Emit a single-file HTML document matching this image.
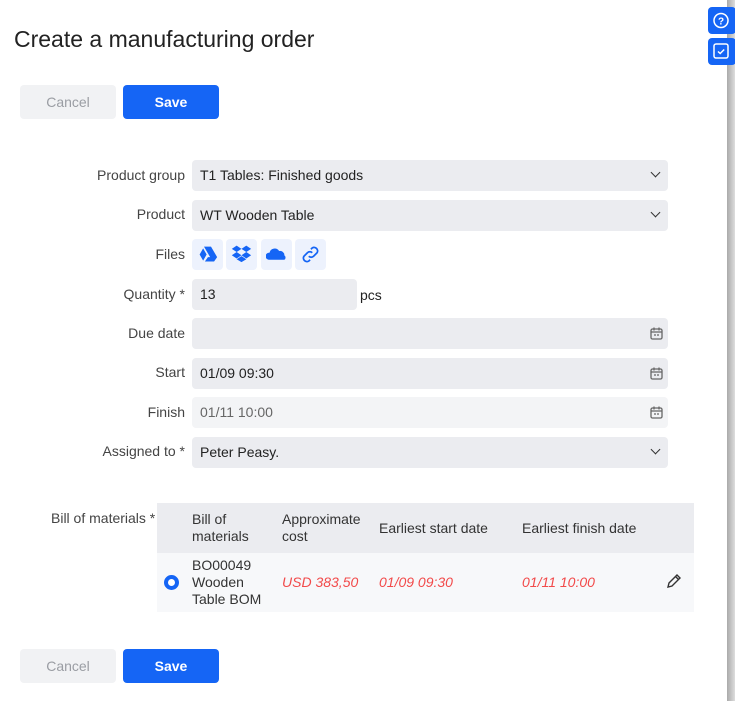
<!DOCTYPE html>
<html><head><style>
*{box-sizing:border-box;margin:0;padding:0}
body{width:735px;height:701px;background:#fff;font-family:"Liberation Sans",sans-serif;color:#222;position:relative;overflow:hidden}
.abs{position:absolute}
h1{position:absolute;left:14px;top:26px;font-size:23px;font-weight:normal;color:#222}
.btn{position:absolute;height:34px;width:96px;border-radius:4px;font-size:14px;text-align:center;line-height:34px}
.cancel{background:#f1f2f4;color:#9a9da3}
.save{background:#1565f5;color:#fff;font-weight:bold}
.lbl{position:absolute;right:550px;font-size:14px;color:#444;text-align:right;white-space:nowrap}
.inp{position:absolute;left:192px;width:476px;height:31px;background:#ebecf0;border-radius:4px;font-size:14px;line-height:31px;padding-left:8px;color:#222}
.chev{position:absolute;right:9px;top:12px;width:7px;height:7px;border-right:1.5px solid #333;border-bottom:1.5px solid #333;transform:rotate(45deg);margin-top:-3px}
.cal{position:absolute;right:5px;top:9px}
.fi{position:absolute;top:239px;width:31px;height:31px;background:#edf2fd;border-radius:4px}
.fi svg{position:absolute;left:5px;top:5px}
table{position:absolute;left:157px;top:503px;width:537px;border-collapse:collapse;font-size:14px}
th{background:#ebecf0;font-weight:normal;text-align:left;color:#333;height:50px;line-height:17px;padding:0}
td{background:#f7f8fa;height:59px;line-height:17px;padding:0;color:#333}
.red{color:#f24a4a;font-style:italic}
</style></head><body>
<h1>Create a manufacturing order</h1>
<div class="btn cancel" style="left:20px;top:85px">Cancel</div>
<div class="btn save" style="left:123px;top:85px">Save</div>

<div class="lbl" style="top:167px">Product group</div>
<div class="inp" style="top:160px">T1 Tables: Finished goods<div class="chev"></div></div>
<div class="lbl" style="top:206px">Product</div>
<div class="inp" style="top:200px">WT Wooden Table<div class="chev"></div></div>
<div class="lbl" style="top:246px">Files</div>
<div class="fi" style="left:192px"><svg width="21" height="21" viewBox="0 0 24 24"><path d="M8 3h8l7 12h-8z M7 5l4 7-4 7-4-7z M9 20l3.5-5H23l-3.5 5z" fill="#1565f5"/></svg></div>
<div class="fi" style="left:226px"><svg width="21" height="21" viewBox="0 0 24 24"><path d="M6 2l6 4-6 4-6-4z M18 2l6 4-6 4-6-4z M6 10l6 4-6 4-6-4z M18 10l6 4-6 4-6-4z M12 15l6 4-6 3.5-6-3.5z" fill="#1565f5" transform="scale(.92) translate(1,0)"/></svg></div>
<div class="fi" style="left:261px"><svg width="21" height="21" viewBox="0 0 24 24"><path d="M3 18a4 4 0 0 1 1-8 6 6 0 0 1 11-2 5 5 0 0 1 6 5 3 3 0 0 1 0 5z" fill="#1565f5"/></svg></div>
<div class="fi" style="left:295px"><svg width="21" height="21" viewBox="0 0 24 24" fill="none" stroke="#1565f5" stroke-width="2"><path d="M10 14a4 4 0 0 0 5.5 0l4-4a4 4 0 0 0-5.5-5.5l-1.5 1.5"/><path d="M14 10a4 4 0 0 0-5.5 0l-4 4a4 4 0 0 0 5.5 5.5l1.5-1.5"/></svg></div>

<div class="lbl" style="top:286px">Quantity *</div>
<div class="inp" style="top:279px;width:165px">13</div>
<div class="abs" style="left:360px;top:287px;font-size:14px">pcs</div>

<div class="lbl" style="top:325px">Due date</div>
<div class="inp" style="top:318px"><svg class="cal" width="13" height="13" viewBox="0 0 13 13" fill="none" stroke="#666" stroke-width="1.3"><rect x="1" y="2" width="11" height="10" rx="1.5"/><path d="M1 5h11M4 0.5v3M9 0.5v3M4 8h2M7 8h2"/></svg></div>
<div class="lbl" style="top:364px">Start</div>
<div class="inp" style="top:358px">01/09 09:30<svg class="cal" width="13" height="13" viewBox="0 0 13 13" fill="none" stroke="#666" stroke-width="1.3"><rect x="1" y="2" width="11" height="10" rx="1.5"/><path d="M1 5h11M4 0.5v3M9 0.5v3M4 8h2M7 8h2"/></svg></div>
<div class="lbl" style="top:404px">Finish</div>
<div class="inp" style="top:397px;background:#f3f4f6;color:#666">01/11 10:00<svg class="cal" width="13" height="13" viewBox="0 0 13 13" fill="none" stroke="#666" stroke-width="1.3"><rect x="1" y="2" width="11" height="10" rx="1.5"/><path d="M1 5h11M4 0.5v3M9 0.5v3M4 8h2M7 8h2"/></svg></div>
<div class="lbl" style="top:443px">Assigned to *</div>
<div class="inp" style="top:437px">Peter Peasy.<div class="chev"></div></div>

<div class="abs" style="left:51px;top:510px;font-size:14px;color:#444">Bill of materials *</div>
<table>
<tr><th style="width:35px"></th><th style="width:90px">Bill of<br>materials</th><th style="width:97px">Approximate<br>cost</th><th style="width:143px">Earliest start date</th><th>Earliest finish date</th><th style="width:28px"></th></tr>
<tr><td><div style="margin-left:7px;width:15px;height:15px;border-radius:50%;border:4.5px solid #1565f5;background:#fff"></div></td><td>BO00049<br>Wooden<br>Table BOM</td><td class="red">USD 383,50</td><td class="red">01/09 09:30</td><td class="red">01/11 10:00</td><td><svg width="16" height="16" viewBox="0 0 16 16" fill="none" stroke="#333" stroke-width="1.4"><path d="M2 14l1-4 8-8 3 3-8 8z M9.5 3.5l3 3"/></svg></td></tr>
</table>

<div class="btn cancel" style="left:20px;top:649px">Cancel</div>
<div class="btn save" style="left:123px;top:649px">Save</div>

<div class="abs" style="left:727px;top:0;width:8px;height:701px;background:linear-gradient(90deg,#aaa,#ddd)"></div>
<div class="abs" style="left:708px;top:7px;width:28px;height:27px;background:#1565f5;border-radius:4px"><svg width="28" height="27" viewBox="0 0 28 27"><circle cx="13" cy="13.5" r="7" fill="none" stroke="#fff" stroke-width="1.5"/><text x="13" y="17.5" font-size="10" font-weight="bold" fill="#fff" text-anchor="middle" font-family="Liberation Sans">?</text></svg></div>
<div class="abs" style="left:708px;top:38px;width:28px;height:27px;background:#1565f5;border-radius:4px"><svg width="28" height="27" viewBox="0 0 28 27" fill="none" stroke="#fff" stroke-width="1.5"><rect x="6" y="6" width="14" height="14" rx="2"/><path d="M10 13.5l2.2 2 4-4"/></svg></div>
</body></html>
